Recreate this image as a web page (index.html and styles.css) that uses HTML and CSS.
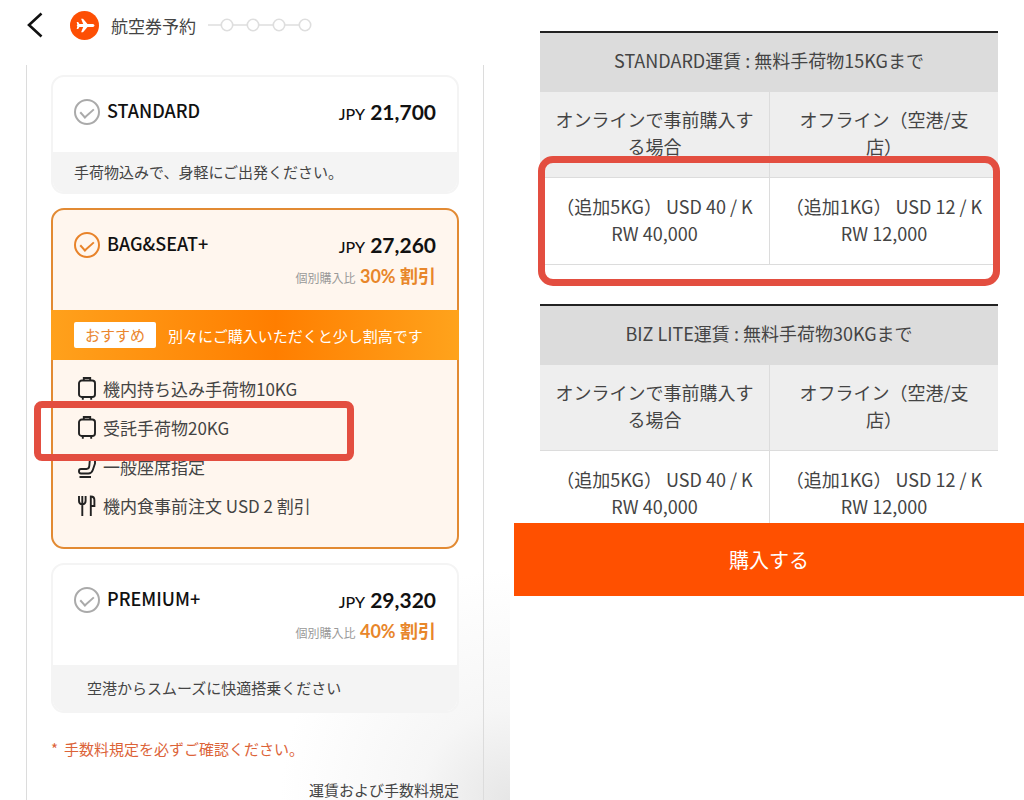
FILE: index.html
```html
<!DOCTYPE html>
<html lang="ja">
<head>
  <meta charset="UTF-8" />
  <meta name="viewport" content="width=device-width, initial-scale=1.0"/>
  <title>航空券予約</title>
  <link rel="stylesheet" href="styles.css">
</head>
<body>
  <div class="page">

    <!-- 運賃選択 -->
    <main class="booking">
      <header class="topbar">
        <button type="button" class="btn-back" aria-label="戻る">
          <svg width="16" height="26" viewBox="0 0 16 26" fill="none" stroke="#111" stroke-width="2.6"><path d="M14.5 1.5L2 13l12.500 11.500"/></svg>
        </button>
        <svg class="logo" width="29" height="29" viewBox="0 0 29 29">
          <circle cx="14.500" cy="14.500" r="14.500" fill="#fd4f04"/>
          <path fill="#fff" d="M24.500 14.500c0-.9-.9-1.500-2.300-1.500h-4.700L13 7.700h-1.900l2.100 5.300H9.400L8.200 11H6.700l.6 2.700-.6.800.6.800-.6 2.700h1.500l1.200-2h3.800l-2.100 5.300H13l4.500-5.300h4.700c1.400 0 2.300-.6 2.300-1.500z"/>
        </svg>
        <h1>航空券予約</h1>
        <svg class="steps" width="104" height="14" viewBox="0 0 104 14" fill="#fff" stroke="#dedede" stroke-width="1.6">
          <path d="M0 7h97"/>
          <circle cx="19" cy="7" r="5.700"/>
          <circle cx="45" cy="7" r="5.700"/>
          <circle cx="71" cy="7" r="5.700"/>
          <circle cx="97" cy="7" r="5.700"/>
        </svg>
      </header>

      <form class="fares">
        <section class="card">
          <div class="card-top">
            <input type="radio" name="fare" id="standard" />
            <label for="standard">STANDARD</label>
            <div class="price">
              <p class="amount"><span>JPY</span> 21,700</p>
            </div>
          </div>
          <p class="card-note">手荷物込みで、身軽にご出発ください。</p>
        </section>

        <section class="card selected">
          <div class="card-top">
            <input type="radio" name="fare" id="bagseat" checked />
            <label for="bagseat">BAG&amp;SEAT+</label>
            <div class="price">
              <p class="amount"><span>JPY</span> 27,260</p>
              <p class="discount"><small>個別購入比</small> 30% 割引</p>
            </div>
          </div>
          <p class="banner"><span class="badge">おすすめ</span>別々にご購入いただくと少し割高です</p>
          <ul class="benefits">
            <li>
              <svg width="18" height="24" viewBox="0 0 18 24" fill="none" stroke="#222" stroke-width="1.900"><rect x="1" y="3.500" width="16" height="16.500" rx="2.800"/><path d="M5.800 3.500V1h6.400v2.500M4.800 20v2.800M13.200 20v2.800"/></svg>
              機内持ち込み手荷物10KG
            </li>
            <li class="marked">
              <svg width="18" height="24" viewBox="0 0 18 24" fill="none" stroke="#222" stroke-width="1.900"><rect x="1" y="3.500" width="16" height="16.500" rx="2.800"/><path d="M5.800 3.500V1h6.400v2.500M4.800 20v2.800M13.200 20v2.800"/></svg>
              受託手荷物20KG
              <span class="frame frame-bag"></span>
            </li>
            <li>
              <svg width="18" height="24" viewBox="0 0 18 24" fill="none" stroke="#222" stroke-width="1.900" stroke-linejoin="round"><path d="M12.200 1h4.800v7.500L14.800 15c-.8 2.500-2 3.500-4.500 3.500H3c-2.700 0-2.700-4.500 0-4.500h5.500c2 0 2.600-1 2.800-3zM1.500 22h11.500"/></svg>
              一般座席指定
            </li>
            <li>
              <svg width="18" height="24" viewBox="0 0 18 24" fill="none" stroke="#222" stroke-width="1.900"><path d="M1 2v5c0 2 1 3.200 3.300 3.200S7.600 9 7.600 7V2M4.300 2v20M12.800 22V2.500c2.600 0 3.600 1.500 3.600 3.500v6h-3.600"/></svg>
              機内食事前注文 USD 2 割引
            </li>
          </ul>
        </section>

        <section class="card">
          <div class="card-top">
            <input type="radio" name="fare" id="premium" />
            <label for="premium">PREMIUM+</label>
            <div class="price">
              <p class="amount"><span>JPY</span> 29,320</p>
              <p class="discount"><small>個別購入比</small> 40% 割引</p>
            </div>
          </div>
          <p class="card-note wide">空港からスムーズに快適搭乗ください</p>
        </section>

        <p class="caution"><span>*</span>手数料規定を必ずご確認ください。</p>
        <a href="#" class="rules">運賃および手数料規定</a>
      </form>
    </main>

    <!-- 手荷物料金 -->
    <aside class="baggage">
      <div class="rates">
        <table>
          <thead>
            <tr><th colspan="2" class="fare-name">STANDARD運賃 : 無料手荷物15KGまで</th></tr>
            <tr><th>オンラインで事前購入する場合</th><th>オフライン（空港/支店）</th></tr>
          </thead>
          <tbody>
            <tr><td>（追加5KG） USD 40 / KRW 40,000</td><td>（追加1KG） USD 12 / KRW 12,000</td></tr>
          </tbody>
        </table>
        <span class="frame frame-rate"></span>
      </div>
      <div class="rates">
        <table>
          <thead>
            <tr><th colspan="2" class="fare-name">BIZ LITE運賃 : 無料手荷物30KGまで</th></tr>
            <tr><th>オンラインで事前購入する場合</th><th>オフライン（空港/支店）</th></tr>
          </thead>
          <tbody>
            <tr><td>（追加5KG） USD 40 / KRW 40,000</td><td>（追加1KG） USD 12 / KRW 12,000</td></tr>
          </tbody>
        </table>
      </div>
      <button type="button" class="btn-buy">購入する</button>
    </aside>

  </div>
</body>
</html>
```

FILE: styles.css
```css
* {
  box-sizing: border-box;
}

body {
  margin: 0;
  font-family: 'Noto Sans CJK JP', sans-serif;
  font-size: 15px;
  color: #444;
  background: #fff;
}

h1, p, ul {
  margin: 0;
  padding: 0;
}

.page {
  display: grid;
  grid-template-columns: 1fr 1fr;
  gap: 4px;
  min-height: 100vh;
}

/* left screen */
.booking {
  display: flex;
  flex-direction: column;
  background: radial-gradient(circle at 100% 100%, #e6e6e6 0, #f6f6f6 90px, rgba(255, 255, 255, 0) 230px);
}

.topbar {
  display: flex;
  align-items: center;
  height: 50px;
  margin-bottom: 15px;
  padding-left: 27px;
}

.btn-back {
  display: flex;
  padding: 0;
  border: none;
  background: none;
  cursor: pointer;
}

.logo {
  margin-left: 27px;
}

.topbar h1 {
  margin: 0 12px;
  font-size: 17px;
  font-weight: normal;
}

.fares {
  flex: 1;
  display: flex;
  flex-direction: column;
  gap: 14px;
  margin: 0 26px;
  padding: 10px 24px 0;
  border: solid #dcdcdc;
  border-width: 0 1px;
}

.card {
  border: 2px solid #f4f4f4;
  border-radius: 13px;
  background: #fff;
}

.selected {
  border-color: #e28a33;
  background: #fff6ee;
}

.card-top {
  display: flex;
  align-items: flex-start;
  gap: 7px;
  padding: 20px 21px 23px;
}

.card-top input {
  appearance: none;
  flex: none;
  display: flex;
  justify-content: center;
  width: 26px;
  height: 26px;
  margin: 2px 0 0;
  border: 2px solid #aaa;
  border-radius: 50%;
  color: #aaa;
  cursor: pointer;
}

.card-top input::after {
  content: "";
  width: 6px;
  height: 11px;
  margin-top: 4px;
  border: solid;
  border-width: 0 2px 2px 0;
  transform: rotate(48deg);
}

.card-top input:checked {
  border-color: #e8832a;
  color: #e8832a;
}

.card-top label {
  font-size: 18px;
  font-weight: 500;
  line-height: 26px;
  color: #111;
}

.price {
  margin-left: auto;
  text-align: right;
  font-family: Lato, 'Noto Sans CJK JP', sans-serif;
  font-weight: bold;
}

.amount {
  font-size: 21px;
  line-height: 30px;
  color: #111;
}

.amount span {
  font-size: 16px;
  font-weight: 500;
}

.discount {
  height: 25px;
  font-size: 18px;
  line-height: 28px;
  color: #e8862a;
}

.discount small {
  font-size: 12px;
  font-weight: normal;
  color: #999;
}

.card-note {
  padding: 8px 21px;
  border-radius: 0 0 11px 11px;
  line-height: 24px;
  background: #f4f4f4;
}

.wide {
  padding: 11px 34px;
}

.banner {
  display: flex;
  align-items: center;
  height: 50px;
  margin: 0 -2px;
  padding-left: 23px;
  color: #fff;
  background: linear-gradient(90deg, #ffa11c, #ff7e00 55%, #ffa31c);
}

.badge {
  margin-right: 12px;
  padding: 0 11px;
  border-radius: 2px;
  line-height: 26px;
  color: #ea862e;
  background: #fff;
}

.benefits {
  padding: 9px 25px 22px;
  list-style: none;
  font-size: 17px;
}

.benefits li {
  display: flex;
  align-items: center;
  gap: 7px;
  height: 39px;
}

.marked {
  position: relative;
}

.caution {
  margin-top: 12px;
  line-height: 20px;
  color: #dc6338;
}

.caution span {
  margin-right: 6px;
}

.rules {
  align-self: flex-end;
  margin-top: 8px;
  line-height: 18px;
  color: #444;
  text-decoration: none;
}

/* right screen */
.baggage {
  padding-top: 31px;
}

.rates {
  position: relative;
  margin: 0 26px 39px;
}

table {
  width: 100%;
  table-layout: fixed;
  border-collapse: separate;
  border-spacing: 0;
  border-top: 2px solid #222;
  font-size: 18px;
  line-height: 27px;
  text-align: center;
  text-spacing-trim: space-all;
  word-break: break-all;
}

th, td {
  padding: 14px 15px 17px;
  border-bottom: 1px solid #dcdcdc;
  font-weight: normal;
}

th {
  background: #eee;
}

td {
  padding-top: 15px;
}

th + th, td + td {
  border-left: 1px solid #dcdcdc;
}

.fare-name {
  background: #dcdcdc;
}

/* covers the end of the last table */
.btn-buy {
  position: relative;
  display: block;
  width: 100%;
  height: 73px;
  margin-top: -54px;
  border: none;
  font-family: inherit;
  font-size: 20px;
  color: #fff;
  background: #ff5000;
  cursor: pointer;
}

/* red marker frames */
.frame {
  position: absolute;
  border: 7px solid #e34e40;
  pointer-events: none;
}

.frame-bag {
  top: -7px;
  left: -44px;
  width: 320px;
  height: 60px;
  border-radius: 8px;
}

.frame-rate {
  inset: 125px -2px -21px;
  border-radius: 15px;
}
```
